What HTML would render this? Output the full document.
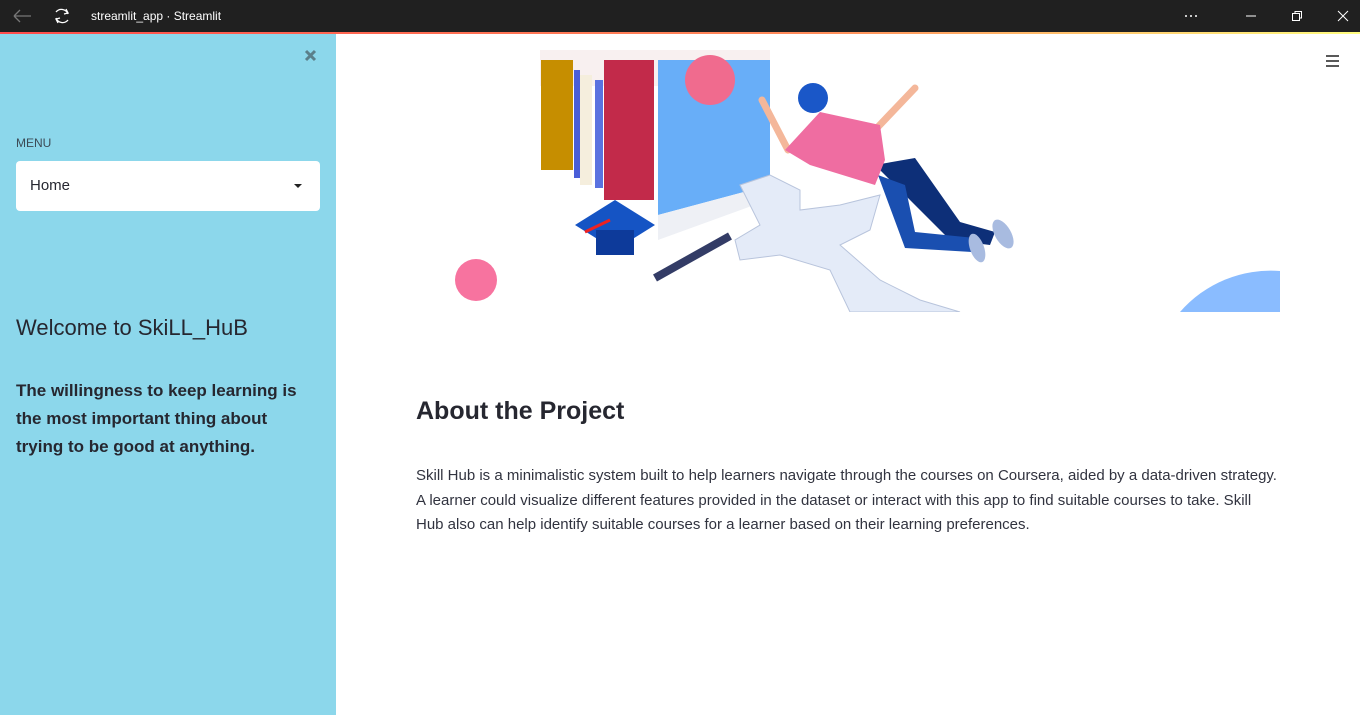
<!DOCTYPE html>
<html><head><meta charset="utf-8"><style>
*{margin:0;padding:0;box-sizing:border-box}
body{width:1360px;height:715px;overflow:hidden;font-family:"Liberation Sans",sans-serif;background:#fff;position:relative}
.top{position:absolute;left:0;top:0;width:1360px;height:32px;background:#202020;color:#fff}
.bar{position:absolute;left:0;top:32px;width:1360px;height:2px;background:linear-gradient(90deg,#ff4b4b,#ff8c5a 60%,#fffd80)}
.side{position:absolute;left:0;top:34px;width:336px;height:681px;background:#8cd7eb;color:#262730}
.sel{position:absolute;left:16px;top:127px;width:304px;height:50px;background:#fff;border-radius:4px;font-size:15px;padding:16px 14px}
</style></head><body>
<div class="top">
<svg width="1360" height="32" style="position:absolute;left:0;top:0">
<path d="M14 16h17M14 16l6-6M14 16l6 6" stroke="#777" stroke-width="1.3" fill="none"/>
<path d="M56 12a7 7 0 0 1 12 2M68 20a7 7 0 0 1-12-2M66 9l2 4 -4 1M58 23l-2-4 4-1" stroke="#fff" stroke-width="1.3" fill="none"/>
<circle cx="1186" cy="16" r="1" fill="#fff"/><circle cx="1191" cy="16" r="1" fill="#fff"/><circle cx="1196" cy="16" r="1" fill="#fff"/>
<path d="M1246 16h10" stroke="#fff"/>
<rect x="1292.5" y="13.5" width="7" height="7" stroke="#fff" fill="none"/><path d="M1295 13.5v-2h6.5v6.5h-2" stroke="#fff" fill="none"/>
<path d="M1338 11l10 10M1348 11l-10 10" stroke="#fff"/>
</svg>
<div style="position:absolute;left:91px;top:9px;font-size:12px">streamlit_app · Streamlit</div>
</div>
<div class="bar"></div>
<div class="side">
<svg width="336" height="60" style="position:absolute;left:0;top:0"><path d="M306 17l9 9M315 17l-9 9" stroke="#5b7f8a" stroke-width="3"/></svg>
<div style="position:absolute;left:16px;top:102px;font-size:12px;color:#3c4a55">MENU</div>
<div class="sel">Home<span style="position:absolute;right:18px;top:23px;border:4px solid transparent;border-top:4px solid #222"></span></div>
<div style="position:absolute;left:16px;top:281px;font-size:22px">Welcome to SkiLL_HuB</div>
<div style="position:absolute;left:16px;top:343px;font-size:17px;font-weight:bold;line-height:28px;width:296px">The willingness to keep learning is the most important thing about trying to be good at anything.</div>
</div>
<svg width="1360" height="715" style="position:absolute;left:0;top:0">
<path d="M1326 56h13M1326 61h13M1326 66h13" stroke="#222" stroke-width="1.6"/>
<rect x="540" y="50" width="230" height="36" fill="#f3e6e6" opacity=".6"/>
<rect x="541" y="60" width="32" height="110" fill="#c68e00"/>
<rect x="574" y="70" width="6" height="108" fill="#4a5ed8"/>
<rect x="580" y="75" width="12" height="110" fill="#f5eedd"/>
<rect x="595" y="80" width="8" height="108" fill="#5a72e0"/>
<rect x="604" y="60" width="50" height="140" fill="#c22a4a"/>
<polygon points="658,60 770,60 770,185 658,215" fill="#68aef8"/>
<polygon points="658,215 770,185 768,200 658,240" fill="#eef0f5"/>
<circle cx="710" cy="80" r="25" fill="#f06b8e"/>
<polygon points="575,225 615,200 655,225 615,250" fill="#1554c4"/>
<rect x="596" y="230" width="38" height="25" fill="#0d3a9a"/>
<path d="M585 232l25-12" stroke="#e22" stroke-width="3"/>
<path d="M655 278l75-42" stroke="#333c66" stroke-width="8"/>
<polygon points="740,185 770,175 800,190 800,210 840,205 880,195 870,230 840,245 880,280 920,300 960,312 850,312 830,270 780,255 740,260 735,240 760,225" fill="#e4ebf8" stroke="#b8c4dc"/>
<path d="M788 150L762 100" stroke="#f4b79a" stroke-width="7" stroke-linecap="round"/>
<path d="M875 130L915 88" stroke="#f4b79a" stroke-width="7" stroke-linecap="round"/>
<polygon points="875,165 915,158 960,222 995,232 990,245 950,240" fill="#0d2f78"/>
<polygon points="878,175 905,185 915,232 975,238 972,252 905,248" fill="#1a4fb0"/>
<ellipse cx="1003" cy="234" rx="8" ry="16" fill="#a8bbe0" transform="rotate(-30 1003 234)"/>
<ellipse cx="977" cy="248" rx="7" ry="15" fill="#a8bbe0" transform="rotate(-20 977 248)"/>
<polygon points="785,150 820,112 880,125 885,160 875,185 810,165" fill="#ef6da1"/>
<circle cx="813" cy="98" r="15" fill="#1a57c8"/>
<circle cx="476" cy="280" r="21" fill="#f7739f"/>
<path d="M1180 312 A120 120 0 0 1 1280 271 V312Z" fill="#8abcff"/>
<rect x="336" y="312" width="1024" height="20" fill="#fff"/>
</svg>
<div style="position:absolute;left:416px;top:397px;font-size:25px;font-weight:bold;color:#262730">About the Project</div>
<div style="position:absolute;left:416px;top:464px;width:866px;font-size:15px;line-height:24.5px;color:#31333f">Skill Hub is a minimalistic system built to help learners navigate through the courses on Coursera, aided by a data-driven strategy. A learner could visualize different features provided in the dataset or interact with this app to find suitable courses to take. Skill Hub also can help identify suitable courses for a learner based on their learning preferences.</div>
</body></html>
